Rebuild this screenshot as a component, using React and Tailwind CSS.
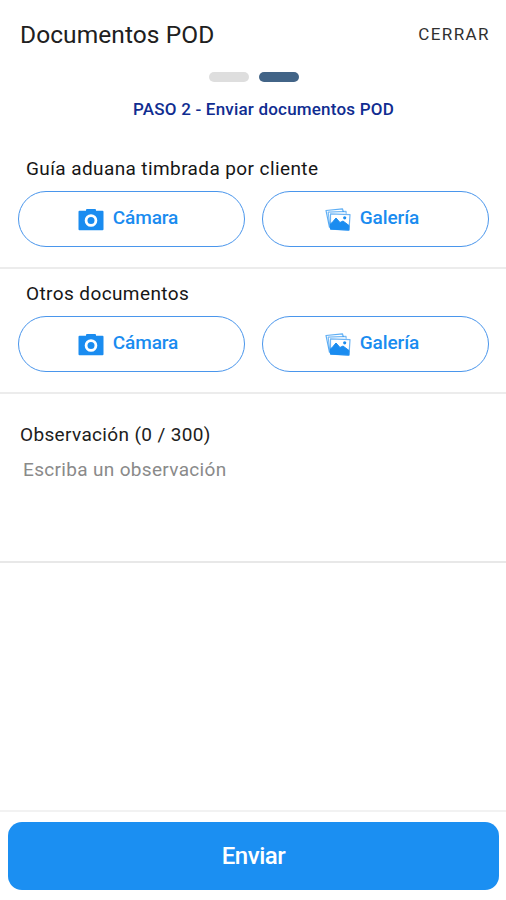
import React, { useState } from "react";

const MAX_CHARS = 300;

// ----- icons -----
const CameraIcon = () => (
  <svg viewBox="0 0 26 23" className="h-[23px] w-[26px] shrink-0" aria-hidden="true">
    <path
      fill="currentColor"
      fillRule="evenodd"
      d="M1.500 2.800H8V2a1 1 0 0 1 1-1h8a1 1 0 0 1 1 1v.8h6.500a1 1 0 0 1 1 1v17.400a1 1 0 0 1-1 1h-23a1 1 0 0 1-1-1V3.800a1 1 0 0 1 1-1ZM13 6.200a6.300 6.300 0 1 0 0 12.600a6.300 6.300 0 0 0 0-12.600Z"
    />
    <circle cx="13" cy="12.500" r="3.500" fill="currentColor" />
  </svg>
);

const GalleryIcon = () => (
  <svg viewBox="0 0 26 23" className="h-[23px] w-[26px] shrink-0" fill="none" aria-hidden="true">
    {/* cards behind */}
    <path d="M4.500 19.500 1 2.500 17.500.8l.8 3" stroke="currentColor" strokeWidth="1.200" strokeLinejoin="round" opacity="0.7" />
    <path d="M5 20 3.200 4.200 21 3.400l.2 2.400" stroke="currentColor" strokeWidth="1.200" strokeLinejoin="round" opacity="0.6" />
    {/* front photo */}
    <path d="m5.500 5.800 19.500.8-1 15.500-18.500-1Z" fill="white" stroke="#6fb5f5" strokeWidth="1.200" strokeLinejoin="round" />
    <path
      d="M5.500 16 8 13.500l3-3.500 4 4.500 3-1.500 6 4.500-.2 4.600-18.300-1Z"
      fill="currentColor"
      stroke="currentColor"
      strokeWidth="1"
      strokeLinejoin="round"
    />
    <circle cx="19.700" cy="9.800" r="1.600" fill="currentColor" />
  </svg>
);

const SourceButton = ({ icon, label }) => (
  <button
    type="button"
    className="flex h-14 flex-1 items-center justify-center gap-[9px] rounded-full border border-[#4a96ec] bg-white pr-[7px] text-[19px] font-medium text-[#1a8cf0]"
  >
    {icon}
    <span className="-mt-0.5 leading-6 tracking-[-0.1px]">{label}</span>
  </button>
);

const DocumentRow = ({ title }) => (
  <section className="border-b-2 border-[#ececec] pr-[17px] pb-5 pl-[18px]">
    <h2 className="mb-2.5 pl-2 text-[19px] leading-6 tracking-[0.4px] text-[#161616]">{title}</h2>
    <div className="flex gap-[17px]">
      <SourceButton icon={<CameraIcon />} label="Cámara" />
      <SourceButton icon={<GalleryIcon />} label="Galería" />
    </div>
  </section>
);

export default function App() {
  const [note, setNote] = useState("");

  return (
    <main className="flex h-[900px] w-full flex-col bg-white font-['Roboto',sans-serif]">
      {/* Header */}
      <header className="flex h-[70px] items-center justify-between pr-4 pl-5">
        <h1 className="text-[24.5px] leading-8 tracking-[0.08px] text-[#202020]">Documentos POD</h1>
        <button type="button" className="-mt-0.5 text-[17px] leading-6 tracking-[1.4px] text-[#303030]">
          CERRAR
        </button>
      </header>

      {/* Step indicator */}
      <div className="flex justify-center gap-2.5 pt-0.5 pl-0.5">
        <span className="h-2.5 w-10 rounded-full bg-[#dedede]" />
        <span className="h-2.5 w-10 rounded-full bg-[#426487]" />
      </div>
      <p className="mt-[15px] pl-[21px] text-center text-[17px] leading-6 font-medium tracking-[0.2px] text-[#102d91]">
        PASO 2 - Enviar documentos POD
      </p>

      <div className="pt-9">
        <DocumentRow title="Guía aduana timbrada por cliente" />
      </div>
      <div className="pt-[13px]">
        <DocumentRow title="Otros documentos" />
      </div>

      {/* Observation */}
      <section className="h-[169px] border-b-2 border-[#e8e8e8] px-5 pt-[29px]">
        <label htmlFor="note" className="block text-[19px] leading-6 tracking-[0.35px] text-[#202020]">
          Observación ({note.length} / {MAX_CHARS})
        </label>
        <textarea
          id="note"
          value={note}
          maxLength={MAX_CHARS}
          onChange={(e) => setNote(e.target.value)}
          placeholder="Escriba un observación"
          className="mt-[11px] block h-20 w-full resize-none pl-[3px] text-[19px] leading-6 tracking-[0.33px] outline-none placeholder:text-[#8a8a8a]"
        />
      </section>

      {/* Submit */}
      <footer className="mt-auto border-t-2 border-[#f2f2f2] pt-2.5 pr-[7px] pb-2.5 pl-2">
        <button
          type="button"
          className="block h-[68px] w-full rounded-[14px] bg-[#1b8ff2] text-[24px] font-medium tracking-[-0.5px] text-white"
        >
          Enviar
        </button>
      </footer>
    </main>
  );
}
